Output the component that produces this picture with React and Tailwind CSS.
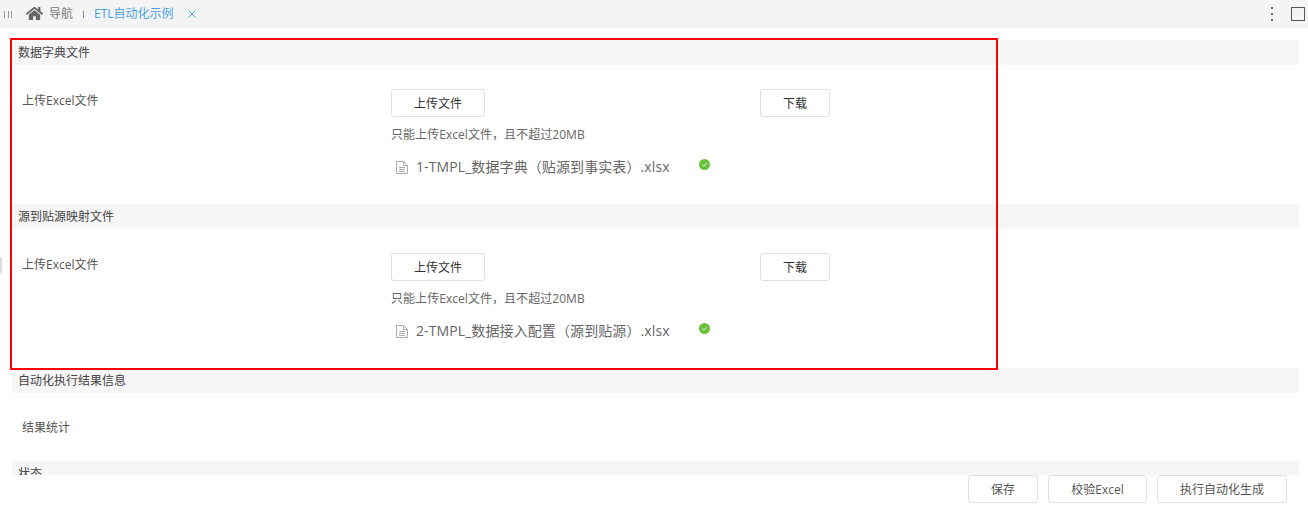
import React from 'react'
import { FaHome } from 'react-icons/fa'

const font = 'font-["Open_Sans","Noto_Sans_CJK_SC",sans-serif]'

function SectionHeader({ title }) {
  return (
    <div className="h-[25px] bg-[#f6f6f6] pl-[6px] text-xs leading-[26px] text-[#444]">{title}</div>
  )
}

function DocIcon() {
  return (
    <svg width="12" height="13" viewBox="0 0 12 13" fill="none" stroke="#a8abb0" strokeWidth="1">
      <path d="M.5 .5h7l4 4v8h-11z" />
      <path d="M7.5 .5v4h4" />
      <path d="M3 6.5h6M3 8.5h6M3 10.5h6" />
    </svg>
  )
}

function UploadSection({ title, fileName }) {
  return (
    <section className="h-[164px]">
      <SectionHeader title={title} />
      <div className="flex pt-6">
        <div className="w-[379px] pl-[10px] pt-[4px] text-xs leading-[16px] text-[#555]">上传Excel文件</div>
        <div className="w-[369px]">
          <button className="block h-7 w-[94px] rounded-[3px] border border-[#dcdfe6] bg-white pt-[2px] text-xs text-[#333]">上传文件</button>
          <div className="mt-[10px] text-xs leading-4 tracking-[0.05px] text-[#666]">只能上传Excel文件，且不超过20MB</div>
          <div className="mt-[14px] flex h-5 items-center pl-[5px] text-sm tracking-[0.1px] text-[#666]">
            <DocIcon />
            <span className="ml-2 w-[281px]">{fileName}</span>
            <svg width="11" height="11" viewBox="0 0 11 11" className="mb-[6px] ml-[2px]">
              <circle cx="5.5" cy="5.5" r="5.5" fill="#67c23a" />
              <path d="M3.2 5.6l1.6 1.5 3-3" fill="none" stroke="#fff" strokeWidth="1" />
            </svg>
          </div>
        </div>
        <button className="h-7 w-[70px] rounded-[3px] border border-[#dcdfe6] bg-white pt-[2px] text-xs text-[#333]">下载</button>
      </div>
    </section>
  )
}

function FooterButton({ label, width }) {
  return (
    <button className={`h-7 rounded-[4px] border border-[#dcdfe6] bg-white pt-[2px] text-xs text-[#555] ${width}`}>{label}</button>
  )
}

export default function App() {
  return (
    <div className={`relative h-[530px] w-[1308px] overflow-hidden bg-white ${font}`}>
      <header className="flex h-7 items-center bg-[#f4f4f4]">
        <div className="ml-1 flex h-[7px] w-2 justify-between">
          <span className="w-px bg-[#999]" />
          <span className="w-px bg-[#999]" />
          <span className="w-px bg-[#999]" />
        </div>
        <FaHome className="mb-[2px] ml-[14px] text-[17px] text-[#666]" />
        <span className="ml-[6px] text-xs text-[#777]">导航</span>
        <span className="ml-[10px] h-[7px] w-px bg-[#888]" />
        <span className="ml-[10px] text-xs text-[#4a9fe8]">ETL自动化示例</span>
        <svg width="8" height="8" viewBox="0 0 8 8" className="ml-[14px]" stroke="#4a9fe8" strokeWidth="1">
          <path d="M.5.5l7 7M7.5.5l-7 7" />
        </svg>
        <div className="ml-auto flex h-[14px] w-[2px] flex-col justify-between">
          <span className="h-[2px] bg-[#666]" />
          <span className="h-[2px] bg-[#666]" />
          <span className="h-[2px] bg-[#666]" />
        </div>
        <div className="ml-[18px] mr-[3px] h-[14px] w-[14px] border border-[#555]" />
      </header>

      <main className="h-[447px] overflow-hidden pl-3 pr-[9px] pt-3">
        <UploadSection title="数据字典文件" fileName="1-TMPL_数据字典（贴源到事实表）.xlsx" />
        <UploadSection title="源到贴源映射文件" fileName="2-TMPL_数据接入配置（源到贴源）.xlsx" />
        <SectionHeader title="自动化执行结果信息" />
        <div className="h-[68px] pl-[10px] pt-[27px] text-xs leading-4 text-[#555]">结果统计</div>
        <SectionHeader title="状态" />
      </main>

      <footer className="flex justify-end gap-[10px] pr-[21px]">
        <FooterButton label="保存" width="w-[70px]" />
        <FooterButton label="校验Excel" width="w-[99px]" />
        <FooterButton label="执行自动化生成" width="w-[130px]" />
      </footer>

      {/* annotation box drawn over the page */}
      <div className="absolute left-[10px] top-[38px] h-[332px] w-[988px] border-2 border-[#f00]" />
      <div className="absolute left-0 top-[257px] h-4 w-[2px] bg-[#ddd]" />
    </div>
  )
}
